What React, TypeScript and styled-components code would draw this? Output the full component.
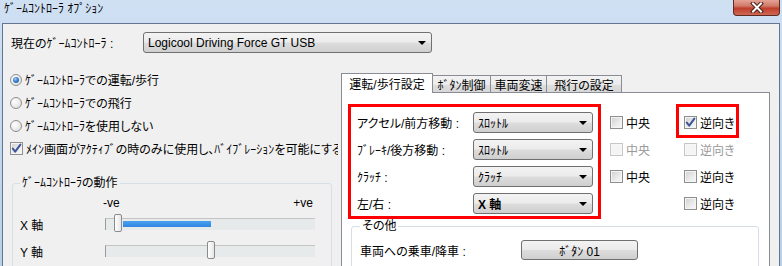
import styled, { createGlobalStyle } from 'styled-components';

const GlobalStyle = createGlobalStyle`
  html, body {
    margin: 0;
    padding: 0;
  }
  body {
    width: 782px;
    height: 266px;
    overflow: hidden;
    font-family: "Liberation Sans", "Noto Sans CJK JP", sans-serif;
    font-size: 12px;
    color: #000;
    font-feature-settings: "palt" 1;
  }
`;

const Window = styled.div`
  width: 782px;
  height: 266px;
  box-sizing: border-box;
  padding: 0 2px;
  display: flex;
  flex-direction: column;
  overflow: hidden;
  background: linear-gradient(180deg, #cfe0f3 0%, #b9d0ea 100%);
`;

const TitleBar = styled.div`
  height: 23px;
  flex: none;
  display: flex;
  justify-content: space-between;
  align-items: flex-start;
`;

const Title = styled.span`
  padding: 2px 0 0 2px;
  line-height: 14px;
`;

const CloseButton = styled.div`
  width: 47px;
  height: 16px;
  box-sizing: border-box;
  display: flex;
  align-items: center;
  justify-content: center;
  border: 1px solid #5e2b22;
  border-top: none;
  border-radius: 0 0 4px 4px;
  background: linear-gradient(180deg, #e4a294 0%, #d07a68 40%, #bf3e2c 55%, #cf6a55 100%);
`;

const Client = styled.div`
  flex: 1;
  display: flex;
  flex-direction: column;
  background: #f0f0f0;
  border: 1px solid #62778f;
  border-bottom: none;
`;

const TopRow = styled.div`
  display: flex;
  align-items: center;
  padding: 8px 0 0 8px;
`;

const TopLabel = styled.span`
  width: 132px;
`;

const Select = styled.div<{ $width: number; $bold?: boolean }>`
  width: ${(p) => p.$width}px;
  height: 21px;
  box-sizing: border-box;
  display: flex;
  align-items: center;
  justify-content: space-between;
  padding: 0 5px 0 4px;
  border: 1px solid #707070;
  border-radius: 3px;
  background: linear-gradient(180deg, #f3f3f3 0%, #ebebeb 49%, #dddddd 51%, #cfcfcf 100%);
  font-weight: ${(p) => (p.$bold ? 700 : 400)};
  white-space: nowrap;
`;

const Arrow = styled.span`
  width: 0;
  height: 0;
  border-left: 4px solid transparent;
  border-right: 4px solid transparent;
  border-top: 4px solid #000;
`;

const Columns = styled.div`
  flex: 1;
  display: flex;
`;

const LeftColumn = styled.div`
  width: 335px;
  overflow: hidden;
  padding-top: 15px;
`;

const OptionRow = styled.div`
  height: 23px;
  display: flex;
  align-items: center;
  gap: 3px;
  padding-left: 7px;
  white-space: nowrap;
`;

const Radio = styled.span`
  width: 12px;
  height: 12px;
  box-sizing: border-box;
  flex: none;
  display: flex;
  align-items: center;
  justify-content: center;
  border: 1px solid #8e8f8f;
  border-radius: 50%;
  background: radial-gradient(circle at 35% 35%, #ffffff, #d9d9d9);
`;

const RadioDot = styled.span`
  width: 6px;
  height: 6px;
  border-radius: 50%;
  background: radial-gradient(circle at 40% 35%, #a8d0f6 0%, #3a7fd0 45%, #1b4f96 100%);
`;

const Box = styled.span<{ $disabled?: boolean }>`
  width: 13px;
  height: 13px;
  box-sizing: border-box;
  flex: none;
  display: flex;
  align-items: center;
  justify-content: center;
  border: 1px solid ${(p) => (p.$disabled ? '#c6c6c6' : '#8e8f8f')};
  box-shadow: inset 0 0 0 1px ${(p) => (p.$disabled ? '#f7f7f7' : '#f4f4f4')};
  background: ${(p) =>
    p.$disabled ? '#f4f4f4' : 'linear-gradient(135deg, #cfcfcf 0%, #ececec 60%, #f8f8f8 100%)'};
`;

const GroupBox = styled.fieldset<{ $width: number }>`
  width: ${(p) => p.$width}px;
  box-sizing: border-box;
  margin: 0;
  min-width: 0;
  border: 1px solid #d5dfe5;
  border-radius: 3px;
`;

const MotionGroup = styled(GroupBox)`
  margin: 16px 0 0 9px;
  padding: 0 0 20px 7px;
`;

const Legend = styled.legend`
  padding: 0 2px;
  line-height: 14px;
`;

const ScaleRow = styled.div`
  width: 210px;
  margin: 6px 0 0 83px;
  display: flex;
  justify-content: space-between;
  line-height: 14px;
`;

const SliderRow = styled.div<{ $gap: number }>`
  height: 20px;
  margin-top: ${(p) => p.$gap}px;
  display: flex;
  align-items: center;
`;

const AxisLabel = styled.span`
  width: 85px;
`;

const Track = styled.div`
  position: relative;
  width: 210px;
  height: 12px;
  box-sizing: border-box;
  border-top: 1px solid #c4c4c4;
  border-left: 1px solid #9a9a9a;
  background: #e7eaea;
`;

const Fill = styled.div`
  position: absolute;
  top: 2px;
  height: 6px;
  background: linear-gradient(180deg, #4aa0f0, #2f86e0);
`;

const Thumb = styled.div`
  position: absolute;
  top: -5px;
  width: 8px;
  height: 18px;
  box-sizing: border-box;
  border: 1px solid #8a8a8a;
  border-radius: 2px;
  background: linear-gradient(90deg, #ffffff, #e6e6e6);
`;

const RightColumn = styled.div`
  margin-left: 3px;
  width: 429px;
  display: flex;
  flex-direction: column;
  padding-top: 20px;
`;

const TabRow = styled.div`
  height: 20px;
  margin-bottom: -1px;
  display: flex;
  align-items: flex-end;
`;

const Tab = styled.div<{ $width: number; $active?: boolean }>`
  width: ${(p) => p.$width}px;
  height: ${(p) => (p.$active ? 20 : 18)}px;
  box-sizing: border-box;
  margin-left: ${(p) => (p.$active ? 0 : -1)}px;
  display: flex;
  align-items: center;
  justify-content: center;
  padding-bottom: ${(p) => (p.$active ? 1 : 0)}px;
  border: 1px solid #898c95;
  border-bottom: none;
  white-space: nowrap;
  position: ${(p) => (p.$active ? 'relative' : 'static')};
  z-index: ${(p) => (p.$active ? 1 : 'auto')};
  background: ${(p) =>
    p.$active ? '#ffffff' : 'linear-gradient(180deg, #f3f3f3 0%, #ebebeb 50%, #dedede 51%, #d6d6d6 100%)'};
`;

const Panel = styled.div`
  flex: 1;
  box-sizing: border-box;
  border: 1px solid #898c95;
  border-bottom: none;
  background: #ffffff;
  padding: 11px 0 0 6px;
`;

const MappingRow = styled.div`
  display: flex;
  align-items: flex-start;
`;

const RedBox = styled.div`
  width: 253px;
  box-sizing: border-box;
  border: 3px solid #ff0000;
  padding: 5px 5px 2px 6px;
  display: flex;
  flex-direction: column;
  gap: 6px;
`;

const FieldRow = styled.div`
  height: 21px;
  display: flex;
  align-items: center;
  white-space: nowrap;
`;

const FieldLabel = styled.span`
  width: 116px;
`;

const CheckColumn = styled.div<{ $width: number; $offset: number }>`
  width: ${(p) => p.$width}px;
  margin-left: ${(p) => p.$offset}px;
  padding-top: 8px;
  display: flex;
  flex-direction: column;
  gap: 6px;
`;

const CheckRow = styled.div`
  height: 21px;
  display: flex;
  align-items: center;
`;

const CheckItem = styled.span<{ $disabled?: boolean; $highlight?: boolean }>`
  position: relative;
  display: flex;
  align-items: center;
  gap: 3px;
  color: ${(p) => (p.$disabled ? '#9a9a9a' : '#000')};
  white-space: nowrap;

  &::after {
    content: '';
    display: ${(p) => (p.$highlight ? 'block' : 'none')};
    position: absolute;
    left: -8px;
    top: -10px;
    right: -4px;
    bottom: -7px;
    border: 3px solid #ff0000;
    pointer-events: none;
  }
`;

const OtherGroup = styled(GroupBox)`
  margin: 0 0 0 3px;
  padding: 7px 0 20px 8px;
`;

const OtherRow = styled.div`
  display: flex;
  align-items: center;
`;

const OtherLabel = styled.span`
  width: 161px;
`;

const PushButton = styled.div`
  width: 117px;
  height: 20px;
  box-sizing: border-box;
  display: flex;
  align-items: center;
  justify-content: center;
  border: 1px solid #707070;
  border-radius: 3px;
  background: linear-gradient(180deg, #f3f3f3 0%, #ebebeb 49%, #dddddd 51%, #cfcfcf 100%);
  white-space: nowrap;
`;

const CheckMark = () => (
  <svg width="11" height="11" viewBox="0 0 11 11">
    <path d="M1.8 5.6 L4.2 8.6 L9.4 1.6" fill="none" stroke="#3f5597" strokeWidth="2" strokeLinecap="round" strokeLinejoin="round" />
  </svg>
);

const CloseGlyph = () => (
  <svg width="14" height="11" viewBox="0 0 14 11">
    <path d="M3 1.5 L11 9.5 M11 1.5 L3 9.5" stroke="#4a1f18" strokeWidth="4" strokeLinecap="square" />
    <path d="M3 1.5 L11 9.5 M11 1.5 L3 9.5" stroke="#ffffff" strokeWidth="2" strokeLinecap="square" />
  </svg>
);

const modes = [
  { label: 'ｹﾞｰﾑｺﾝﾄﾛｰﾗでの運転/歩行', selected: true },
  { label: 'ｹﾞｰﾑｺﾝﾄﾛｰﾗでの飛行', selected: false },
  { label: 'ｹﾞｰﾑｺﾝﾄﾛｰﾗを使用しない', selected: false },
];

const tabs = [
  { label: '運転/歩行設定', width: 92, active: true },
  { label: 'ﾎﾞﾀﾝ制御', width: 59 },
  { label: '車両変速', width: 57 },
  { label: '飛行の設定', width: 76 },
];

const mappings = [
  { label: 'アクセル/前方移動 :', value: 'ｽﾛｯﾄﾙ' },
  { label: 'ﾌﾞﾚｰｷ/後方移動 :', value: 'ｽﾛｯﾄﾙ' },
  { label: 'ｸﾗｯﾁ :', value: 'ｸﾗｯﾁ' },
  { label: '左/右 :', value: 'X 軸', bold: true },
];

type Check = { checked?: boolean; disabled?: boolean; highlight?: boolean } | null;

const centerChecks: Check[] = [{}, { disabled: true }, {}, null];
const reverseChecks: Check[] = [{ checked: true, highlight: true }, { disabled: true }, {}, {}];

const axes = [
  { label: 'X 軸', thumb: 8, fill: [17, 105] as [number, number], gap: 4 },
  { label: 'Y 軸', thumb: 101, fill: null, gap: 7 },
];

function CheckList({ items, text, width, offset }: { items: Check[]; text: string; width: number; offset: number }) {
  return (
    <CheckColumn $width={width} $offset={offset}>
      {items.map((item, index) => (
        <CheckRow key={index}>
          {item && (
            <CheckItem $disabled={item.disabled} $highlight={item.highlight}>
              <Box $disabled={item.disabled}>{item.checked && <CheckMark />}</Box>
              {text}
            </CheckItem>
          )}
        </CheckRow>
      ))}
    </CheckColumn>
  );
}

export default function App() {
  return (
    <>
      <GlobalStyle />
      <Window>
        <TitleBar>
          <Title>ｹﾞｰﾑｺﾝﾄﾛｰﾗ ｵﾌﾟｼｮﾝ</Title>
          <CloseButton>
            <CloseGlyph />
          </CloseButton>
        </TitleBar>
        <Client>
          <TopRow>
            <TopLabel>現在のｹﾞｰﾑｺﾝﾄﾛｰﾗ :</TopLabel>
            <Select $width={289}>
              <span>Logicool Driving Force GT USB</span>
              <Arrow />
            </Select>
          </TopRow>
          <Columns>
            <LeftColumn>
              {modes.map((mode) => (
                <OptionRow key={mode.label}>
                  <Radio>{mode.selected && <RadioDot />}</Radio>
                  {mode.label}
                </OptionRow>
              ))}
              <OptionRow>
                <Box>
                  <CheckMark />
                </Box>
                ﾒｲﾝ画面がｱｸﾃｨﾌﾞの時のみに使用し、ﾊﾞｲﾌﾞﾚｰｼｮﾝを可能にする
              </OptionRow>
              <MotionGroup $width={320}>
                <Legend>ｹﾞｰﾑｺﾝﾄﾛｰﾗの動作</Legend>
                <ScaleRow>
                  <span>-ve</span>
                  <span>+ve</span>
                </ScaleRow>
                {axes.map((axis) => (
                  <SliderRow key={axis.label} $gap={axis.gap}>
                    <AxisLabel>{axis.label}</AxisLabel>
                    <Track>
                      {axis.fill && (
                        <Fill style={{ left: axis.fill[0], width: axis.fill[1] - axis.fill[0] }} />
                      )}
                      <Thumb style={{ left: axis.thumb }} />
                    </Track>
                  </SliderRow>
                ))}
              </MotionGroup>
            </LeftColumn>
            <RightColumn>
              <TabRow>
                {tabs.map((tab) => (
                  <Tab key={tab.label} $width={tab.width} $active={tab.active}>
                    {tab.label}
                  </Tab>
                ))}
              </TabRow>
              <Panel>
                <MappingRow>
                  <RedBox>
                    {mappings.map((m) => (
                      <FieldRow key={m.label}>
                        <FieldLabel>{m.label}</FieldLabel>
                        <Select $width={120} $bold={m.bold}>
                          <span>{m.value}</span>
                          <Arrow />
                        </Select>
                      </FieldRow>
                    ))}
                  </RedBox>
                  <CheckList items={centerChecks} text="中央" width={74} offset={9} />
                  <CheckList items={reverseChecks} text="逆向き" width={70} offset={0} />
                </MappingRow>
                <OtherGroup $width={408}>
                  <Legend>その他</Legend>
                  <OtherRow>
                    <OtherLabel>車両への乗車/降車 :</OtherLabel>
                    <PushButton>ﾎﾞﾀﾝ 01</PushButton>
                  </OtherRow>
                </OtherGroup>
              </Panel>
            </RightColumn>
          </Columns>
        </Client>
      </Window>
    </>
  );
}
